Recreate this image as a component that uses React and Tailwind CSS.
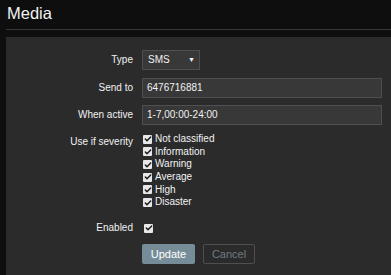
import { Check } from "lucide-react";

const severities = ["Not classified", "Information", "Warning", "Average", "High", "Disaster"];

function Box() {
  return (
    <span className="flex h-[9px] w-[9px] shrink-0 items-center justify-center rounded-[1px] bg-[#e8e8e8]">
      <Check className="h-[8px] w-[8px] text-[#1c1c1c]" strokeWidth={4.5} />
    </span>
  );
}

function Row({ label, children, className = "" }) {
  return (
    <div className={`flex items-center ${className}`}>
      <div className="w-[127px] shrink-0 text-right">{label}</div>
      <div className="ml-[9px] flex flex-1 items-center">{children}</div>
    </div>
  );
}

export default function App() {
  return (
    <div className="h-[275px] w-[391px] overflow-hidden bg-[#0e0e0e] pl-[6px] font-['Liberation_Sans',Arial,sans-serif] text-[#f2f2f2]">
      <div className="h-[29px] pl-[1px] pt-[3px] text-[16.5px] leading-[20px]">Media</div>
      <div className="border-t border-[#383838]" />
      <div className="mt-[7px] h-[240px] bg-[#2b2b2b] pr-[9px] pt-[13px] text-[10px] leading-[12.67px]">
        <Row label="Type">
          <div className="flex h-[20px] w-[58px] items-center justify-between border border-[#4f4f4f] bg-[#383838] pl-[5px] pr-[4px]">
            <span>SMS</span>
            <span className="text-[7px]">▼</span>
          </div>
        </Row>
        <Row label="Send to" className="mt-[8px]">
          <div className="flex h-[20px] flex-1 items-center border border-[#4f4f4f] bg-[#383838] px-[4px]">6476716881</div>
        </Row>
        <Row label="When active" className="mt-[7px]">
          <div className="flex h-[20px] flex-1 items-center border border-[#4f4f4f] bg-[#383838] px-[4px]">1-7,00:00-24:00</div>
        </Row>
        <div className="mt-[8px] flex items-start">
          <div className="w-[127px] shrink-0 pt-[3px] text-right">Use if severity</div>
          <div className="ml-[10px] flex flex-col">
            {severities.map((s) => (
              <div key={s} className="flex h-[12.67px] items-center gap-[3px]">
                <Box />
                <span>{s}</span>
              </div>
            ))}
          </div>
        </div>
        <div className="mt-[13px] flex h-[13px] items-center">
          <div className="w-[127px] shrink-0 text-right">Enabled</div>
          <div className="ml-[11px]">
            <Box />
          </div>
        </div>
        <div className="ml-[136px] mt-[9px] flex gap-[8px]">
          <button className="h-[20px] w-[53px] rounded-[2px] bg-[#768d99] text-[11px] text-white">Update</button>
          <button className="h-[20px] w-[52px] rounded-[2px] border border-[#4f4f4f] text-[11px] text-[#6e7b83]">Cancel</button>
        </div>
      </div>
    </div>
  );
}
